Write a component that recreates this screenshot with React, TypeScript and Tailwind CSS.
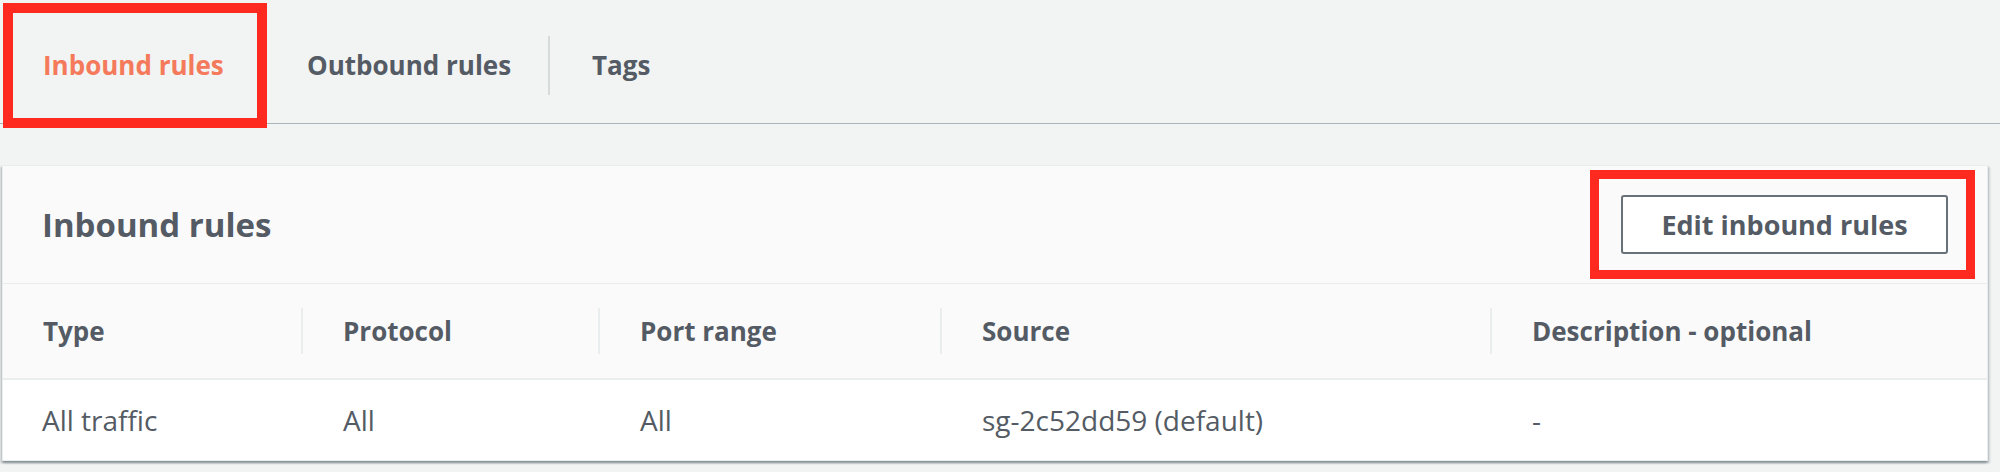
import React from "react";

export default function App() {
  const headers = ["Type", "Protocol", "Port range", "Source", "Description - optional"];
  const row = ["All traffic", "All", "All", "sg-2c52dd59 (default)", "-"];
  return (
    <div className="relative w-[2000px] h-[472px] overflow-hidden bg-[#f2f3f3] text-[#545b64] font-['Open_Sans',sans-serif]">
      {/* Tabs */}
      <div className="h-[124px] border-b border-[#aab7b8] flex items-center pt-[7px]">
        <div className="w-[264px] pl-[43px] text-[26px] leading-[36px] font-bold text-[#f47a5b]">Inbound rules</div>
        <div className="w-[2px] h-[59px] bg-[#d5dbdb]" />
        <div className="w-[282px] pl-[41px] text-[26px] leading-[36px] font-bold">Outbound rules</div>
        <div className="w-[2px] h-[59px] bg-[#d5dbdb]" />
        <div className="pl-[42px] text-[26px] leading-[36px] font-bold">Tags</div>
      </div>

      {/* Panel */}
      <div className="mt-[41px] ml-[2px] w-[1986px] bg-white border border-[#eaeded] shadow-[0_2px_2px_0_rgba(0,28,36,0.3),2px_2px_2px_0_rgba(0,28,36,0.12),-2px_2px_2px_0_rgba(0,28,36,0.12)]">
        <div className="h-[118px] bg-[#fafafa] border-b border-[#eaeded] flex items-center justify-between pl-[39px] pr-[39px]">
          <h2 className="text-[33px] leading-[44px] font-bold">Inbound rules</h2>
          <button className="w-[327px] h-[59px] bg-white border-2 border-[#687078] rounded-[3px] text-[27px] leading-none font-bold text-[#545b64]">
            Edit inbound rules
          </button>
        </div>
        <div className="h-[96px] bg-[#fafafa] border-b-2 border-[#eaeded] grid grid-cols-[298px_297px_342px_550px_1fr] items-center">
          {headers.map((h, i) => (
            <div key={h} className="flex items-center">
              {i > 0 ? <div className="w-[2px] h-[46px] bg-[#eaeded]" /> : null}
              <span className="ml-[40px] text-[26px] leading-[36px] font-bold">{h}</span>
            </div>
          ))}
        </div>
        <div className="h-[80px] bg-white grid grid-cols-[298px_297px_342px_550px_1fr] items-center">
          {row.map((c, i) => (
            <div key={i} className={i === 0 ? "pl-[39px]" : "pl-[42px]"}>
              <span className="text-[28px] leading-[36px]">{c}</span>
            </div>
          ))}
        </div>
      </div>

      {/* Annotation boxes */}
      <div className="absolute left-[3px] top-[3px] w-[264px] h-[125px] border-[10px] border-[#ff2a1f]" />
      <div className="absolute left-[1590px] top-[170px] w-[385px] h-[109px] border-[9px] border-[#ff2a1f]" />
    </div>
  );
}
